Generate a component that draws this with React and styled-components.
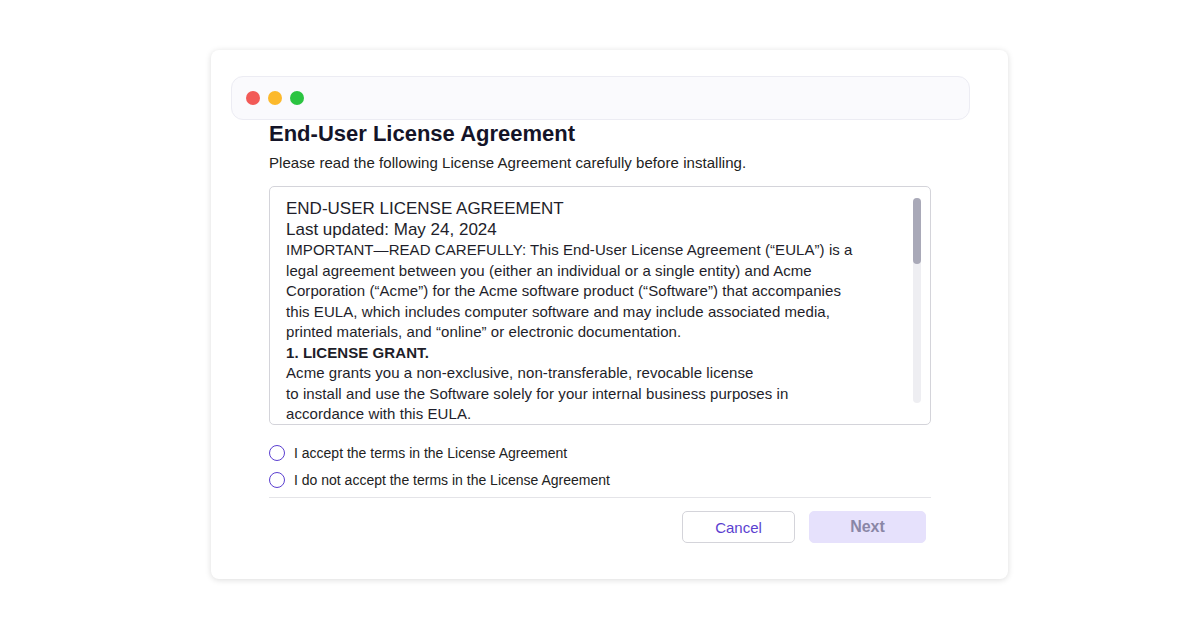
import React from 'react';
import styled, { createGlobalStyle } from 'styled-components';

const Global = createGlobalStyle`
  body { margin: 0; background: #fff; font-family: "Liberation Sans", Arial, sans-serif; color: #1a1a2e; }
`;

const Page = styled.div`
  width: 1200px;
  height: 630px;
  padding: 50px 0 0 211px;
  box-sizing: border-box;
  display: flex;
`;

const Card = styled.div`
  width: 797px;
  height: 529px;
  box-sizing: border-box;
  background: #fff;
  border-radius: 8px;
  box-shadow: 0 1px 6px rgba(0, 0, 0, 0.14);
  padding: 26px 38px 0 20px;
`;

const TitleBar = styled.div`
  height: 44px;
  box-sizing: border-box;
  border: 1px solid #ececf3;
  border-radius: 12px;
  background: #fafafd;
  display: flex;
  align-items: center;
  gap: 8px;
  padding-left: 14px;
`;

const Dot = styled.span`
  width: 14px;
  height: 14px;
  border-radius: 50%;
  background: ${(p) => p.color};
`;

const Body = styled.div`
  padding: 0 39px 0 38px;
`;

const Title = styled.h1`
  margin: 1px 0 0;
  font-size: 22px;
  line-height: 26px;
  font-weight: 700;
  color: #141428;
`;

const Sub = styled.p`
  margin: 6px 0 0;
  font-size: 15px;
  line-height: 20px;
  letter-spacing: 0.05px;
  color: #222;
`;

const Box = styled.div`
  margin-top: 13px;
  height: 239px;
  box-sizing: border-box;
  border: 1px solid #d4d4da;
  border-radius: 5px;
  display: flex;
  padding: 11px 9px 0 16px;
  overflow: hidden;
`;

const Text = styled.div`
  flex: 1;
  font-size: 15px;
  line-height: 20.5px;
  letter-spacing: 0.07px;
  color: #1e1e2a;
`;

const Head = styled.div`
  font-size: 17px;
  line-height: 21px;
  letter-spacing: 0;
`;

const Bold = styled.div`
  font-weight: 700;
`;

const Track = styled.div`
  width: 8px;
  height: 205px;
  border-radius: 4px;
  background: #eeeef2;
  position: relative;
`;

const Thumb = styled.div`
  position: absolute;
  top: 0;
  left: 0;
  width: 8px;
  height: 66px;
  border-radius: 4px;
  background: #a9a9b8;
`;

const Options = styled.div`
  margin-top: 19px;
  display: flex;
  flex-direction: column;
  gap: 9px;
  padding-bottom: 8px;
  border-bottom: 1px solid #e4e4e8;
`;

const Option = styled.label`
  display: flex;
  align-items: center;
  gap: 9px;
  font-size: 14px;
  line-height: 18px;
  color: #222;
`;

const Radio = styled.span`
  width: 14px;
  height: 14px;
  border: 1.5px solid #5b3fd0;
  border-radius: 50%;
`;

const Actions = styled.div`
  display: flex;
  justify-content: flex-end;
  gap: 14px;
  padding: 13px 5px 0 0;
`;

const Button = styled.button`
  height: 32px;
  width: ${(p) => p.w}px;
  border-radius: 5px;
  font-family: inherit;
  border: 1px solid ${(p) => (p.primary ? '#e6e1fc' : '#d4d4da')};
  background: ${(p) => (p.primary ? '#e6e1fc' : '#fff')};
  color: ${(p) => (p.primary ? '#8a86a6' : '#5b3fd0')};
  font-weight: ${(p) => (p.primary ? 700 : 400)};
  font-size: ${(p) => (p.primary ? 16 : 15)}px;
`;

export default function App() {
  return (
    <>
      <Global />
      <Page>
        <Card>
          <TitleBar>
            <Dot color="#f25a57" />
            <Dot color="#fcb92c" />
            <Dot color="#2bc441" />
          </TitleBar>
          <Body>
            <Title>End-User License Agreement</Title>
            <Sub>Please read the following License Agreement carefully before installing.</Sub>
            <Box>
              <Text>
                <Head>END-USER LICENSE AGREEMENT</Head>
                <Head>Last updated: May 24, 2024</Head>
                IMPORTANT—READ CAREFULLY: This End-User License Agreement (“EULA”) is a<br />
                legal agreement between you (either an individual or a single entity) and Acme<br />
                Corporation (“Acme”) for the Acme software product (“Software”) that accompanies<br />
                this EULA, which includes computer software and may include associated media,<br />
                printed materials, and “online” or electronic documentation.
                <Bold>1. LICENSE GRANT.</Bold>
                Acme grants you a non-exclusive, non-transferable, revocable license<br />
                to install and use the Software solely for your internal business purposes in<br />
                accordance with this EULA.
              </Text>
              <Track><Thumb /></Track>
            </Box>
            <Options>
              <Option><Radio />I accept the terms in the License Agreement</Option>
              <Option><Radio />I do not accept the terms in the License Agreement</Option>
            </Options>
            <Actions>
              <Button w={113}>Cancel</Button>
              <Button primary w={117}>Next</Button>
            </Actions>
          </Body>
        </Card>
      </Page>
    </>
  );
}
